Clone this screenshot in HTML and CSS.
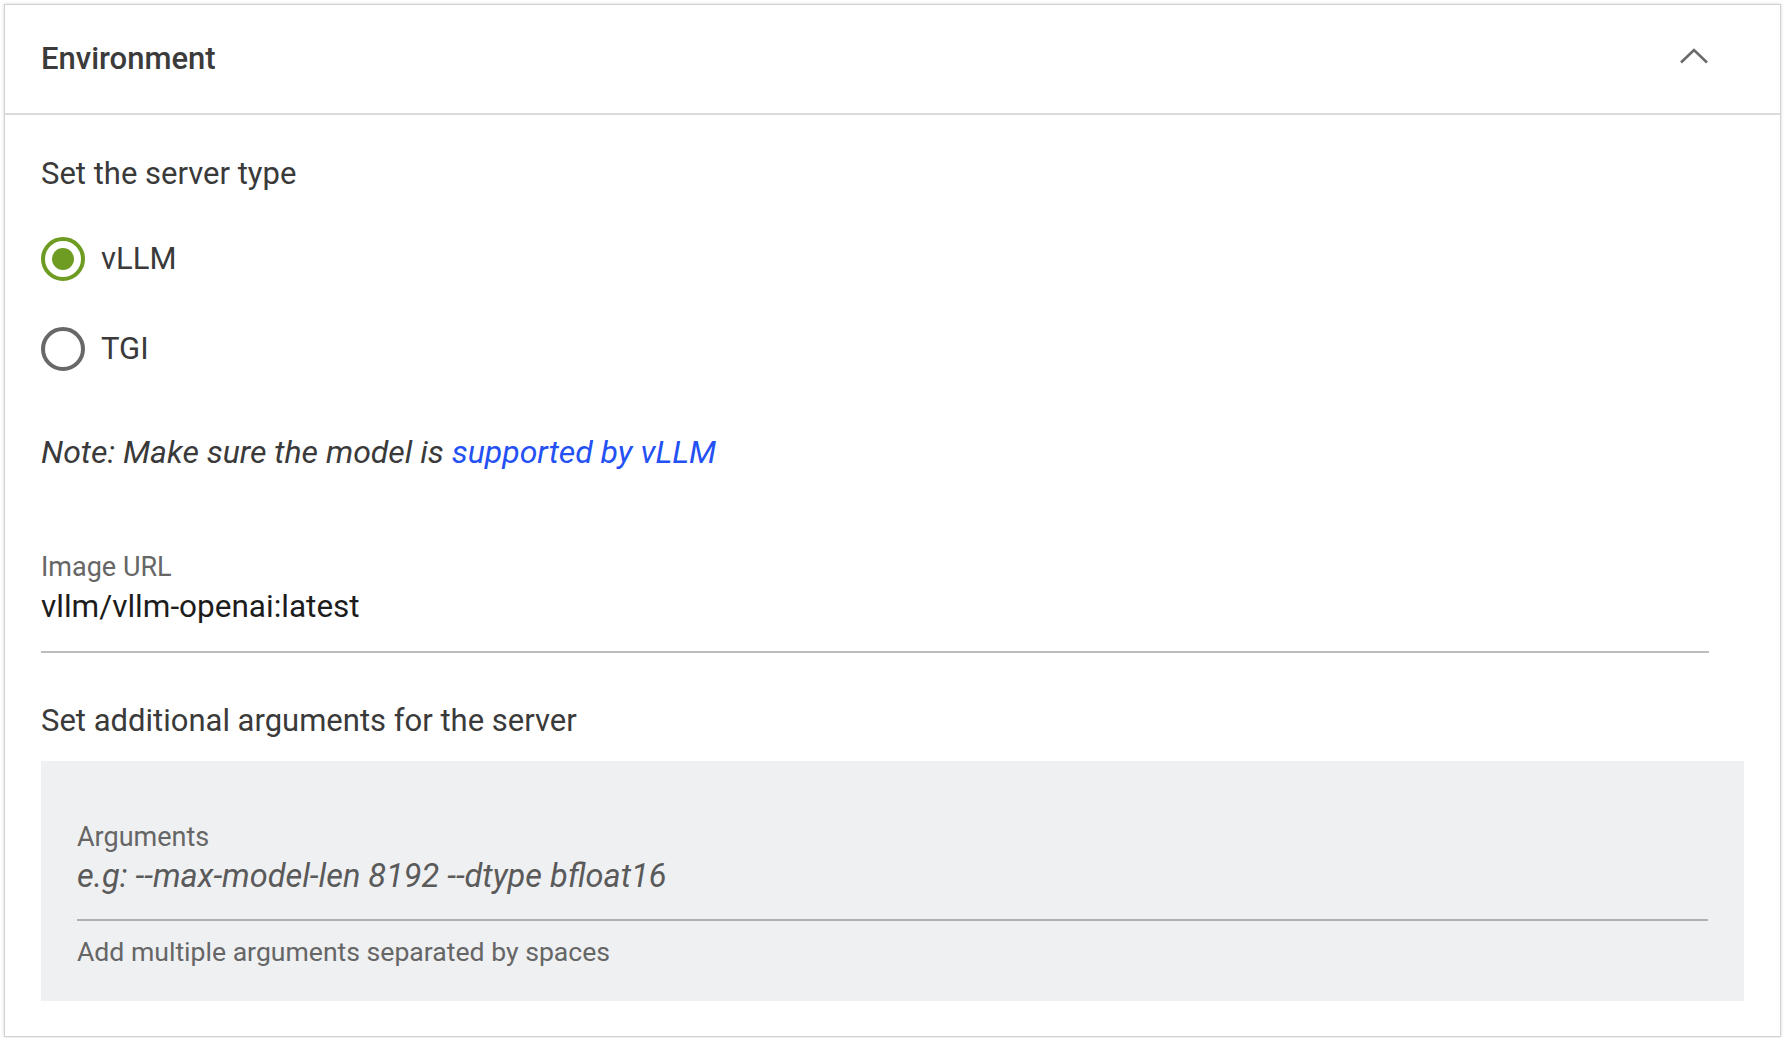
FILE: index.html
```html
<!DOCTYPE html>
<html lang="en">
<head>
<meta charset="utf-8">
<title>Environment</title>
<link rel="stylesheet" href="styles.css">
</head>
<body>
<div class="page">
  <section class="card">
    <header class="card-header">
      <h2 class="card-title">Environment</h2>
      <svg class="chevron" width="30" height="16" viewBox="0 0 30 16" aria-hidden="true">
        <polyline points="2,14.5 15,2 28,14.5" fill="none" stroke="#6a6a6a" stroke-width="2.6"/>
      </svg>
    </header>
    <div class="card-body">
      <p class="section-title">Set the server type</p>
      <div class="radio-group">
        <label class="radio-row">
          <span class="radio radio-checked"><span class="radio-dot"></span></span>
          <span class="radio-label">vLLM</span>
        </label>
        <label class="radio-row">
          <span class="radio"></span>
          <span class="radio-label">TGI</span>
        </label>
      </div>
      <p class="note">Note: Make sure the model is <a class="note-link" href="#">supported by vLLM</a></p>
      <div class="field">
        <div class="field-label">Image URL</div>
        <div class="field-value">vllm/vllm-openai:latest</div>
      </div>
      <p class="section-title section-title-args">Set additional arguments for the server</p>
      <div class="args-box">
        <div class="args-field">
          <div class="field-label">Arguments</div>
          <div class="args-placeholder">e.g: --max-model-len 8192 --dtype bfloat16</div>
        </div>
        <div class="helper">Add multiple arguments separated by spaces</div>
      </div>
    </div>
  </section>
</div>
</body>
</html>
```

FILE: styles.css
```css
* { box-sizing: border-box; }
html, body {
  margin: 0;
  padding: 0;
  background: #ffffff;
}
body {
  font-family: Roboto, "Noto Sans", "Liberation Sans", sans-serif;
  color: #3a3a3a;
}
.page {
  padding: 4px 5px 1px 4px;
}
.card {
  border: 1px solid #d2d2d2;
  box-shadow: 0 0 3px rgba(0, 0, 0, 0.18);
  background: #ffffff;
}
.card-header {
  height: 110px;
  display: flex;
  align-items: center;
  justify-content: space-between;
  padding: 0 71px 0 36px;
  border-bottom: 2px solid #dadada;
}
.card-title {
  margin: 0;
  font-size: 31px;
  font-weight: 500;
  color: #3b3b3b;
  line-height: 36px;
}
.chevron {
  display: block;
  margin-top: -6px;
}
.card-body {
  padding: 41px 36px 35px 36px;
}
.section-title {
  margin: 0;
  font-size: 31px;
  line-height: 36px;
  color: #3a3a3a;
}
.radio-group {
  margin-top: 45px;
  display: flex;
  flex-direction: column;
  gap: 46px;
}
.radio-row {
  display: flex;
  align-items: center;
  height: 44px;
  gap: 16px;
}
.radio {
  width: 44px;
  height: 44px;
  border-radius: 50%;
  border: 4px solid #686868;
  display: flex;
  align-items: center;
  justify-content: center;
  flex: none;
}
.radio-checked {
  border-color: #6e9b22;
}
.radio-dot {
  width: 22px;
  height: 22px;
  border-radius: 50%;
  background: #6e9b22;
}
.radio-label {
  font-size: 31px;
  line-height: 36px;
  color: #3a3a3a;
}
.note {
  margin: 63px 0 0 0;
  font-size: 32px;
  line-height: 36px;
  font-style: italic;
  color: #3a3a3a;
}
.note-link {
  color: #2451f4;
  text-decoration: none;
}
.field {
  margin: 82px 35px 0 0;
  padding-bottom: 27px;
  border-bottom: 2px solid #bdbdbd;
}
.field-label {
  font-size: 27px;
  line-height: 30px;
  color: #666666;
}
.field-value {
  margin-top: 8px;
  font-size: 31.5px;
  line-height: 34px;
  color: #1c1c1c;
}
.section-title-args {
  margin-top: 50px;
}
.args-box {
  margin-top: 22px;
  background: #eff0f2;
  padding: 61px 36px 34px 36px;
}
.args-field {
  padding-bottom: 26px;
  border-bottom: 2px solid #b0b0b0;
}
.args-placeholder {
  margin-top: 7px;
  font-size: 32.5px;
  line-height: 34px;
  font-style: italic;
  color: #5a5a5a;
}
.helper {
  margin-top: 16px;
  font-size: 26.6px;
  line-height: 30px;
  color: #666666;
}
```
